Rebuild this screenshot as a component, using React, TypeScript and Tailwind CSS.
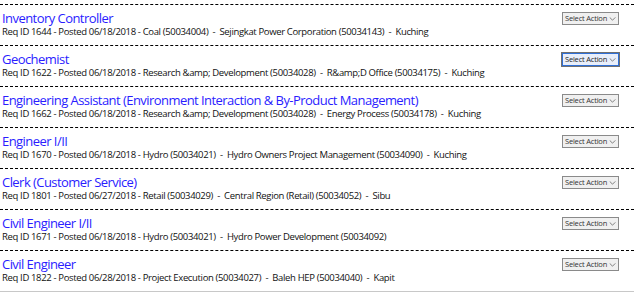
const jobs = [
  {
    title: 'Inventory Controller',
    meta: 'Req ID 1644 - Posted 06/18/2018 - Coal (50034004)  -  Sejingkat Power Corporation (50034143)  -  Kuching',
  },
  {
    title: 'Geochemist',
    meta: 'Req ID 1622 - Posted 06/18/2018 - Research &amp; Development (50034028)  -  R&amp;D Office (50034175)  -  Kuching',
    focused: true,
  },
  {
    title: 'Engineering Assistant (Environment Interaction & By-Product Management)',
    meta: 'Req ID 1662 - Posted 06/18/2018 - Research &amp; Development (50034028)  -  Energy Process (50034178)  -  Kuching',
  },
  {
    title: 'Engineer I/II',
    meta: 'Req ID 1670 - Posted 06/18/2018 - Hydro (50034021)  -  Hydro Owners Project Management (50034090)  -  Kuching',
  },
  {
    title: 'Clerk (Customer Service)',
    meta: 'Req ID 1801 - Posted 06/27/2018 - Retail (50034029)  -  Central Region (Retail) (50034052)  -  Sibu',
  },
  {
    title: 'Civil Engineer I/II',
    meta: 'Req ID 1671 - Posted 06/18/2018 - Hydro (50034021)  -  Hydro Power Development (50034092)',
  },
  {
    title: 'Civil Engineer',
    meta: 'Req ID 1822 - Posted 06/28/2018 - Project Execution (50034027)  -  Baleh HEP (50034040)  -  Kapit',
  },
];

export default function App() {
  return (
    <div className="w-[639px] h-[296px] bg-white pt-1 font-['Open_Sans',sans-serif]">
      <div className="w-[634px] border-b border-[#c8c8c8]">
        {jobs.map((job) => (
          <JobRow key={job.title} {...job} />
        ))}
      </div>
    </div>
  );
}

function JobRow({ title, meta, focused }: { title: string; meta: string; focused?: boolean }) {
  return (
    <div className="h-[41px] border-t border-dashed border-black flex justify-between pl-[2px] pr-[15px]">
      <div className="pt-[5px]">
        <div className="text-[13px] leading-[16px] text-[#2a1cff] tracking-[-0.55px] whitespace-nowrap">{title}</div>
        <div className="text-[9.5px] leading-[12px] text-[#111] whitespace-pre tracking-[-0.35px]">{meta}</div>
      </div>
      <div className="pt-[7px]">
        <button
          className={
            focused
              ? 'h-[13px] w-[57px] flex items-center gap-[2px] pl-[2px] whitespace-nowrap bg-[#e8eefa] border border-[#2f6fd6] shadow-[0_0_0_1px_#707070] text-[7.5px] leading-none text-[#222]'
              : 'h-[13px] w-[57px] flex items-center gap-[2px] pl-[2px] whitespace-nowrap bg-[#f0f0f0] border border-[#8a8a8a] text-[7.5px] leading-none text-[#333]'
          }
        >
          <span className="tracking-[-0.2px]">Select Action</span>
          <svg viewBox="0 0 8 5" className="w-[7px] h-[4px] shrink-0">
            <path d="M0.5 0.5 L4 4 L7.5 0.5" fill="none" stroke="#555" strokeWidth="0.9" />
          </svg>
        </button>
      </div>
    </div>
  );
}
